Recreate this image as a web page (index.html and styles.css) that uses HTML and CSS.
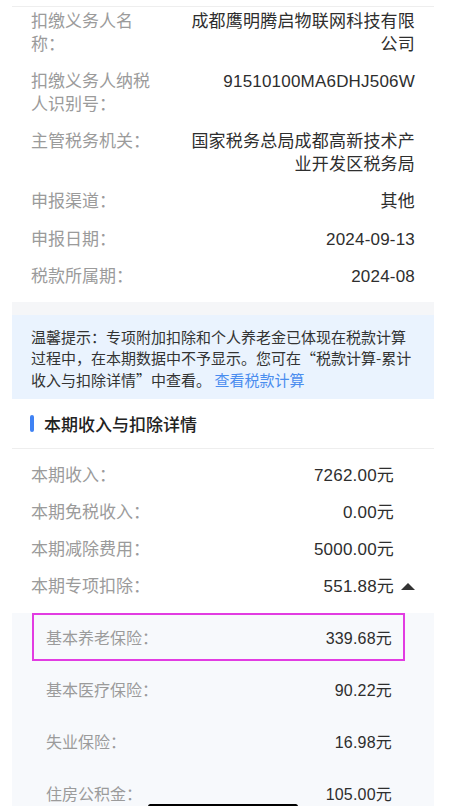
FILE: index.html
```html
<!DOCTYPE html>
<html lang="zh-CN">
<head>
<meta charset="utf-8">
<title>申报详情</title>
<link rel="stylesheet" href="styles.css">
</head>
<body>
<div class="page">
  <section class="info">
    <div class="row"><span class="label">扣缴义务人名称：</span><span class="value">成都鹰明腾启物联网科技有限公司</span></div>
    <div class="row"><span class="label">扣缴义务人纳税人识别号：</span><span class="value">91510100MA6DHJ506W</span></div>
    <div class="row"><span class="label">主管税务机关：</span><span class="value">国家税务总局成都高新技术产业开发区税务局</span></div>
    <div class="row"><span class="label">申报渠道：</span><span class="value">其他</span></div>
    <div class="row"><span class="label">申报日期：</span><span class="value">2024-09-13</span></div>
    <div class="row"><span class="label">税款所属期：</span><span class="value">2024-08</span></div>
  </section>
  <div class="gap"></div>
  <div class="tip">温馨提示：专项附加扣除和个人养老金已体现在税款计算过程中，在本期数据中不予显示。您可在“税款计算-累计收入与扣除详情”中查看。 <a class="link">查看税款计算</a></div>
  <h2 class="section-title"><span class="bar"></span>本期收入与扣除详情</h2>
  <section class="income">
    <div class="row"><span class="label">本期收入：</span><span class="value">7262.00元</span><span class="slot"></span></div>
    <div class="row"><span class="label">本期免税收入：</span><span class="value">0.00元</span><span class="slot"></span></div>
    <div class="row"><span class="label">本期减除费用：</span><span class="value">5000.00元</span><span class="slot"></span></div>
    <div class="row"><span class="label">本期专项扣除：</span><span class="value">551.88元</span><span class="slot"><span class="caret"></span></span></div>
  </section>
  <section class="sub">
    <div class="sub-row"><span class="sub-label">基本养老保险：</span><span class="sub-value">339.68元</span><span class="highlight"></span></div>
    <div class="sub-row"><span class="sub-label">基本医疗保险：</span><span class="sub-value">90.22元</span></div>
    <div class="sub-row"><span class="sub-label">失业保险：</span><span class="sub-value">16.98元</span></div>
    <div class="sub-row"><span class="sub-label">住房公积金：</span><span class="sub-value">105.00元</span></div>
  </section>
</div>
<div class="home-indicator"></div>
</body>
</html>
```

FILE: styles.css
```css
* { box-sizing: border-box; }
html, body { margin: 0; padding: 0; background: #ffffff; }
body {
  font-family: "Liberation Sans", "Noto Sans CJK SC", sans-serif;
  color: #333333;
  height: 806px;
  overflow: hidden;
}
.page {
  padding: 6px 15px 0 12px;
}
.info {
  border-top: 1px solid #eeeeee;
  padding: 4px 19px 13.5px;
}
.row {
  display: flex;
  align-items: flex-start;
  font-size: 17px;
  line-height: 22.5px;
  margin-bottom: 15px;
}
.row:last-child { margin-bottom: 0; }
.label {
  flex: 0 0 120px;
  color: #9b9b9b;
}
.value {
  flex: 1;
  min-width: 0;
  padding-left: 36px;
  text-align: right;
  color: #2e2e2e;
  letter-spacing: 0.2px;
}
.gap {
  height: 13px;
  background: #f5f6f8;
}
.tip {
  background: #eaf3fe;
  padding: 10.5px 19px 9px;
  font-family: "Noto Sans CJK SC", "Liberation Sans", sans-serif;
  font-size: 15px;
  line-height: 21.5px;
  color: #333333;
}
.link { color: #4a8def; }
.section-title {
  margin: 0;
  height: 50px;
  display: flex;
  align-items: center;
  padding: 0 18px;
  font-size: 17px;
  font-weight: 500;
  color: #222222;
  border-bottom: 1px solid #eeeeee;
}
.bar {
  width: 4px;
  height: 17px;
  border-radius: 2px;
  background: #3f82f4;
  margin-right: 10px;
}
.income {
  padding: 16px 19px 0;
}
.income .row { margin-bottom: 14.5px; }
.income .row:last-child { margin-bottom: 14.5px; }
.income .label { flex: 1 1 auto; }
.income .value { flex: 0 0 auto; padding-left: 0; }
.slot {
  flex: 0 0 21px;
  display: flex;
  justify-content: flex-end;
  align-items: center;
  height: 22.5px;
}
.caret {
  width: 0;
  height: 0;
  border-left: 7px solid transparent;
  border-right: 7px solid transparent;
  border-bottom: 7px solid #333333;
  margin-bottom: 1px;
}
.sub {
  background: #f7f9fc;
}
.sub-row {
  position: relative;
  display: flex;
  justify-content: space-between;
  padding: 15px 42px 15px 34px;
  font-size: 16px;
  line-height: 22px;
}
.sub-label { color: #9b9b9b; }
.sub-value { color: #2e2e2e; letter-spacing: 0.2px; }
.highlight {
  position: absolute;
  left: 20px;
  top: 0;
  width: 373px;
  height: 48px;
  border: 2.5px solid #e23ce2;
}
.home-indicator {
  position: fixed;
  left: 148px;
  bottom: -3px;
  width: 150px;
  height: 5px;
  border-radius: 3px;
  background: #000000;
}
```
